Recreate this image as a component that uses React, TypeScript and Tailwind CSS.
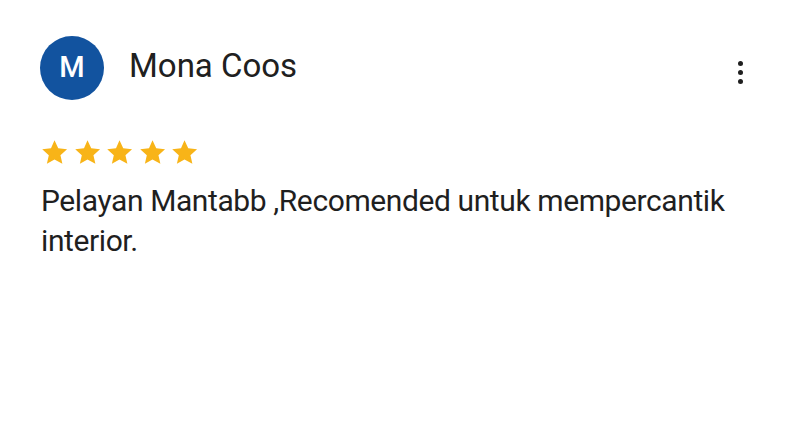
import React from "react";

const Star = () => (
  <svg viewBox="0 0 24 24" className="w-[31px] h-[31px]">
    <path
      fill="#f8b418"
      d="M12 2.6l2.9 6.2 6.8.7-5.1 4.6 1.5 6.7L12 17.4l-5.9 3.4 1.5-6.7-5.1-4.6 6.8-.7z"
    />
  </svg>
);

const App = () => {
  return (
    <div
      className="w-[800px] h-[425px] bg-white text-[#1f1f1f]"
      style={{ fontFamily: "Roboto, 'Liberation Sans', sans-serif" }}
    >
      <div className="pl-[40px] pr-[50px] pt-[36px]">
        <div className="flex items-center">
          <div className="w-[64px] h-[64px] rounded-full bg-[#12539f] flex items-center justify-center text-white text-[29px] font-medium">
            M
          </div>
          <span className="ml-[25px] text-[33px] text-[#202020] -mt-[4px]">Mona Coos</span>
          <div className="ml-auto mt-[8px] flex flex-col gap-[4px] mr-[7px]">
            <span className="block w-[5px] h-[5px] rounded-full bg-[#1f1f1f]" />
            <span className="block w-[5px] h-[5px] rounded-full bg-[#1f1f1f]" />
            <span className="block w-[5px] h-[5px] rounded-full bg-[#1f1f1f]" />
          </div>
        </div>
        <div className="flex gap-[1.5px] mt-[37px] -ml-[1px]">
          <Star />
          <Star />
          <Star />
          <Star />
          <Star />
        </div>
        <p className="mt-[13px] ml-[1px] text-[30px] leading-[40px] tracking-[-0.4px] w-[710px]">
          Pelayan Mantabb ,Recomended untuk mempercantik interior.
        </p>
      </div>
    </div>
  );
};

export default App;
